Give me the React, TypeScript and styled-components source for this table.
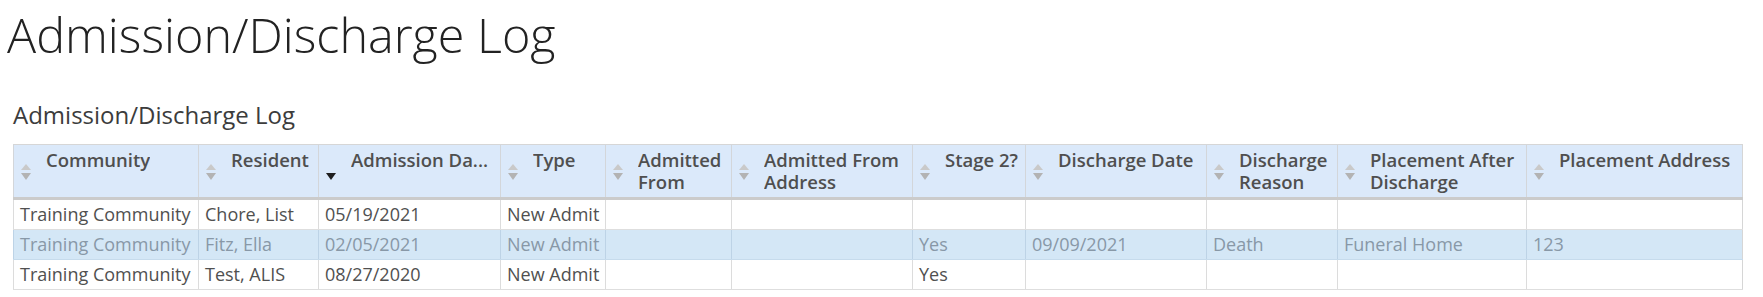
import styled, { createGlobalStyle } from "styled-components";

const GlobalStyle = createGlobalStyle`
  body {
    margin: 0;
    background: #ffffff;
    font-family: "Open Sans", "DejaVu Sans", sans-serif;
  }
`;

type Column = { key: string; label: string; width: number; sorted?: boolean };

const columns: Column[] = [
  { key: "community", label: "Community", width: 185 },
  { key: "resident", label: "Resident", width: 120 },
  { key: "admitDate", label: "Admission Da...", width: 182, sorted: true },
  { key: "type", label: "Type", width: 105 },
  { key: "from", label: "Admitted From", width: 126 },
  { key: "fromAddress", label: "Admitted From Address", width: 181 },
  { key: "stage2", label: "Stage 2?", width: 113 },
  { key: "dischargeDate", label: "Discharge Date", width: 181 },
  { key: "reason", label: "Discharge Reason", width: 131 },
  { key: "placement", label: "Placement After Discharge", width: 189 },
  { key: "placementAddress", label: "Placement Address", width: 216 },
];

type Row = Record<string, string> & { id: string };

const rows: Row[] = [
  {
    id: "1",
    community: "Training Community",
    resident: "Chore, List",
    admitDate: "05/19/2021",
    type: "New Admit",
    from: "",
    fromAddress: "",
    stage2: "",
    dischargeDate: "",
    reason: "",
    placement: "",
    placementAddress: "",
  },
  {
    id: "2",
    community: "Training Community",
    resident: "Fitz, Ella",
    admitDate: "02/05/2021",
    type: "New Admit",
    from: "",
    fromAddress: "",
    stage2: "Yes",
    dischargeDate: "09/09/2021",
    reason: "Death",
    placement: "Funeral Home",
    placementAddress: "123",
  },
  {
    id: "3",
    community: "Training Community",
    resident: "Test, ALIS",
    admitDate: "08/27/2020",
    type: "New Admit",
    from: "",
    fromAddress: "",
    stage2: "Yes",
    dischargeDate: "",
    reason: "",
    placement: "",
    placementAddress: "",
  },
];

const selectedId = "2";

const SortIcon = ({ active }: { active?: boolean }) => (
  <IconBox>
    <Arrow $dir="up" $hidden={active} />
    <Arrow $dir="down" $active={active} />
  </IconBox>
);

const App = () => {
  return (
    <Page>
      <GlobalStyle />
      <PageTitle>Admission/Discharge Log</PageTitle>
      <Panel>
        <PanelTitle>Admission/Discharge Log</PanelTitle>
        <Grid>
          <colgroup>
            {columns.map((c) => (
              <col key={c.key} style={{ width: c.width }} />
            ))}
          </colgroup>
          <thead>
            <tr>
              {columns.map((c) => (
                <HeadCell key={c.key}>
                  <HeadInner>
                    <SortIcon active={c.sorted} />
                    <HeadText>{c.label}</HeadText>
                  </HeadInner>
                </HeadCell>
              ))}
            </tr>
          </thead>
          <tbody>
            {rows.map((r) => (
              <BodyRow key={r.id} $selected={r.id === selectedId}>
                {columns.map((c) => (
                  <Cell key={c.key}>{r[c.key]}</Cell>
                ))}
              </BodyRow>
            ))}
          </tbody>
        </Grid>
      </Panel>
    </Page>
  );
};

export default App;

const Page = styled.div`
  width: 1763px;
  height: 297px;
  overflow: hidden;
`;

const PageTitle = styled.h1`
  margin: 2px 0 0 7px;
  font-size: 48.5px;
  font-weight: 300;
  line-height: 65px;
  color: #222222;
`;

const Panel = styled.section`
  padding: 32px 0 0 13px;
`;

const PanelTitle = styled.h2`
  margin: 0 0 14px 0;
  font-size: 24px;
  font-weight: 400;
  line-height: 31px;
  color: #3c3c3c;
`;

const Grid = styled.table`
  width: 1729px;
  table-layout: fixed;
  border-collapse: collapse;
  border: 1px solid #d6d6d6;
`;

const HeadCell = styled.th`
  height: 52px;
  padding: 0;
  vertical-align: top;
  text-align: left;
  background: #dbe9fa;
  border-left: 1px solid #d3d6da;
  border-bottom: 3px solid #cbcbcb;
`;

const HeadInner = styled.div`
  display: flex;
  height: 52px;
  padding: 0 6px 0 7px;
  box-sizing: border-box;
`;

const IconBox = styled.span`
  flex: 0 0 10px;
  display: flex;
  flex-direction: column;
  justify-content: center;
  gap: 3px;
  margin-right: 15px;
  padding-top: 2px;
`;

const Arrow = styled.span<{ $dir: "up" | "down"; $active?: boolean; $hidden?: boolean }>`
  width: 0;
  height: 0;
  border-left: 5px solid transparent;
  border-right: 5px solid transparent;
  visibility: ${(p) => (p.$hidden ? "hidden" : "visible")};
  ${(p) =>
    p.$dir === "up"
      ? `border-bottom: 6px solid #c9c9c9;`
      : `border-top: 7px solid ${p.$active ? "#1e1e1e" : "#b3b3b3"};`}
`;

const HeadText = styled.span`
  padding-top: 4px;
  font-size: 18.5px;
  font-weight: 600;
  line-height: 22px;
  color: #4f4f4f;
  overflow: hidden;
  white-space: normal;
`;

const BodyRow = styled.tr<{ $selected?: boolean }>`
  background: ${(p) => (p.$selected ? "#d4e7f6" : "#ffffff")};
  color: ${(p) => (p.$selected ? "#8898a7" : "#505050")};

  td {
    border-left-color: ${(p) => (p.$selected ? "#bdd3e6" : "#dcdcdc")};
    border-bottom-color: ${(p) => (p.$selected ? "#c6dbec" : "#dedede")};
  }
`;

const Cell = styled.td`
  height: 29px;
  padding: 0 6px;
  font-size: 18px;
  line-height: 29px;
  white-space: nowrap;
  overflow: hidden;
  border-left: 1px solid #dcdcdc;
  border-bottom: 1px solid #dedede;
  box-sizing: content-box;
`;
